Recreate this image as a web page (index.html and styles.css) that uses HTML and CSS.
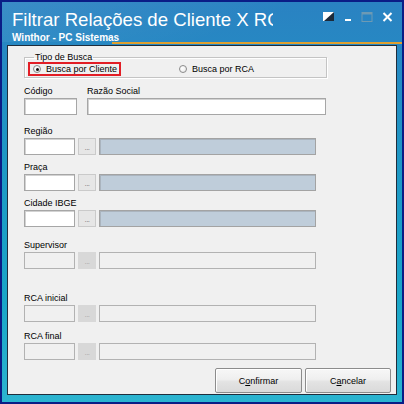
FILE: index.html
```html
<!DOCTYPE html>
<html lang="pt-BR">
<head>
<meta charset="utf-8">
<title>Filtrar Relações de Cliente X RCA</title>
<link rel="stylesheet" href="styles.css">
</head>
<body>
<div class="window">
  <div class="titlebar">
    <div class="titles">
      <div class="title">Filtrar Relações de Cliente X RCA</div>
      <div class="subtitle">Winthor - PC Sistemas</div>
    </div>
    <div class="controls">
      <svg class="ctl" width="12" height="10" viewBox="0 0 12 10"><rect x="0.5" y="0.5" width="10" height="8" fill="#fff" stroke="#fff"/><polygon points="11,0 11,9 1,9" fill="#1c2a3a"/></svg>
      <svg class="ctl" width="8" height="10" viewBox="0 0 8 10"><rect x="1" y="7" width="6" height="2" fill="#fff"/></svg>
      <svg class="ctl dim" width="12" height="10" viewBox="0 0 12 10"><rect x="1" y="0.5" width="10" height="9" fill="none" stroke="#6d9ab4" stroke-width="1"/><rect x="1" y="0.5" width="10" height="2" fill="#6d9ab4"/></svg>
      <svg class="ctl" width="11" height="10" viewBox="0 0 11 10"><path d="M1.5 1 L9.5 9 M9.5 1 L1.5 9" stroke="#fff" stroke-width="2"/></svg>
    </div>
  </div>
  <div class="accent"></div>
  <div class="panel">
    <fieldset class="group">
      <legend>Tipo de Busca</legend>
      <div class="radios">
        <label class="radio highlight"><span class="dot checked"></span>Busca por Cliente</label>
        <label class="radio second"><span class="dot"></span>Busca por RCA</label>
      </div>
    </fieldset>

    <div class="pair">
      <div class="col">
        <div class="lbl">Código</div>
        <div class="inp code"></div>
      </div>
      <div class="col wide">
        <div class="lbl">Razão Social</div>
        <div class="inp razao"></div>
      </div>
    </div>

    <div class="field f-regiao">
      <div class="lbl">Região</div>
      <div class="row"><div class="inp small"></div><div class="btn-dots">...</div><div class="desc"></div></div>
    </div>
    <div class="field f-praca">
      <div class="lbl">Praça</div>
      <div class="row"><div class="inp small"></div><div class="btn-dots">...</div><div class="desc"></div></div>
    </div>
    <div class="field f-cidade">
      <div class="lbl">Cidade IBGE</div>
      <div class="row"><div class="inp small"></div><div class="btn-dots">...</div><div class="desc"></div></div>
    </div>
    <div class="field f-super disabled">
      <div class="lbl">Supervisor</div>
      <div class="row"><div class="inp small"></div><div class="btn-dots">...</div><div class="desc"></div></div>
    </div>
    <div class="field f-rcai disabled">
      <div class="lbl">RCA inicial</div>
      <div class="row"><div class="inp small"></div><div class="btn-dots">...</div><div class="desc"></div></div>
    </div>
    <div class="field f-rcaf disabled">
      <div class="lbl">RCA final</div>
      <div class="row"><div class="inp small"></div><div class="btn-dots">...</div><div class="desc"></div></div>
    </div>

    <div class="actions">
      <button class="btn confirm">C<u>o</u>nfirmar</button>
      <button class="btn cancel">C<u>a</u>ncelar</button>
    </div>
  </div>
</div>
</body>
</html>
```
FILE: styles.css
```css
* { box-sizing: border-box; }
html, body { margin: 0; padding: 0; }
body {
  width: 404px;
  height: 404px;
  overflow: hidden;
  font-family: "Liberation Sans", Arial, sans-serif;
  font-size: 9px;
  color: #000;
}
.window {
  width: 404px;
  height: 404px;
  border: 2px solid #0a1c86;
  background: linear-gradient(180deg, #2a82c2 0%, #1e98c5 40%, #1aa6c8 75%, #2cb4d0 100%);
  display: flex;
  flex-direction: column;
}
.titlebar {
  height: 40px;
  display: flex;
  justify-content: space-between;
  align-items: flex-start;
  background: linear-gradient(160deg, rgba(255,255,255,0.08) 0%, rgba(255,255,255,0) 60%);
}
.titles {
  width: 271px;
  overflow: hidden;
  padding: 7px 0 0 10px;
  color: #fff;
  white-space: nowrap;
}
.title {
  font-size: 18.6px;
  line-height: 22px;
}
.subtitle {
  font-size: 10px;
  font-weight: bold;
  line-height: 11px;
  margin-top: 1px;
}
.controls {
  display: flex;
  align-items: flex-start;
  padding: 10px 9px 0 0;
  gap: 9px;
}
.ctl { display: block; }
.accent {
  height: 2px;
  margin-left: 110px;
  background: #e0a030;
}
.panel {
  flex: 1;
  margin: 1px 5px 7px 5px;
  border: 1px solid #1f2d3c;
  background: #f0f0f0;
  padding: 0 5px 0 16px;
  display: flex;
  flex-direction: column;
}
.group {
  margin: 6px 0 0 0;
  width: 303px;
  padding: 0 0 1px 3px;
  border: 1px solid #c4c4c4;
  box-shadow: inset 1px 1px 0 #fff, 1px 1px 0 #fff;
}
.group legend {
  padding: 0 1px;
  margin-left: 6px;
  line-height: 10px;
  font-size: 9px;
}
.radios {
  display: flex;
  align-items: center;
  height: 14px;
}
.radio {
  display: flex;
  align-items: center;
  height: 14px;
  white-space: nowrap;
}
.highlight {
  width: 93px;
  border: 2px solid #e21e26;
  padding-left: 3px;
}
.second {
  margin-left: 58px;
}
.dot {
  width: 8px;
  height: 8px;
  border-radius: 50%;
  border: 1px solid #8a8a8a;
  background: radial-gradient(circle at 35% 35%, #fff 0%, #e6e6e6 100%);
  margin-right: 5px;
  position: relative;
}
.dot.checked::after {
  content: "";
  position: absolute;
  left: 1.5px;
  top: 1.5px;
  width: 3px;
  height: 3px;
  border-radius: 50%;
  background: #111;
}
.lbl {
  height: 12px;
  line-height: 12px;
  margin-bottom: 1px;
  white-space: nowrap;
}
.pair {
  display: flex;
  margin-top: 7px;
}
.col.wide { margin-left: 10px; }
.inp {
  height: 17px;
  background: #fff;
  border: 1px solid #a6a6a6;
  box-shadow: inset 1px 1px 0 #d2d2d2;
}
.inp.code { width: 53px; }
.inp.razao { width: 239px; }
.row {
  display: flex;
  height: 17px;
}
.inp.small { width: 51px; }
.btn-dots {
  width: 18px;
  height: 17px;
  margin-left: 3px;
  background: #e6e6e6;
  border: 1px solid #cacaca;
  color: #7a7a7a;
  font-size: 8px;
  line-height: 17px;
  text-align: center;
  letter-spacing: -0.5px;
}
.desc {
  width: 217px;
  height: 17px;
  margin-left: 3px;
  background: #bfcdda;
  border: 1px solid #a3a3a3;
  box-shadow: inset 1px 1px 0 #aab4be;
}
.f-regiao { margin-top: 10px; }
.f-praca { margin-top: 6px; }
.f-cidade { margin-top: 6px; }
.f-super { margin-top: 12px; }
.f-rcai { margin-top: 23px; }
.f-rcaf { margin-top: 8px; }
.disabled .inp,
.disabled .desc {
  background: #f0f0f0;
  border: 1px solid #b2b2b2;
  box-shadow: none;
}
.disabled .btn-dots {
  background: #d8d8d8;
  border-color: #d8d8d8;
  color: #a8a8a8;
}
.actions {
  display: flex;
  justify-content: flex-end;
  gap: 3px;
  margin-top: 8px;
}
.btn {
  height: 25px;
  font-family: "Liberation Sans", Arial, sans-serif;
  font-size: 9px;
  color: #000;
  border: 1px solid #8c8c8c;
  border-radius: 2px;
  background: linear-gradient(180deg, #f7f7f7 0%, #efefef 45%, #e3e3e3 55%, #dadada 100%);
  box-shadow: inset 1px 1px 0 #fff;
  padding: 0;
}
.btn.confirm { width: 87px; }
.btn.cancel { width: 86px; }
```
